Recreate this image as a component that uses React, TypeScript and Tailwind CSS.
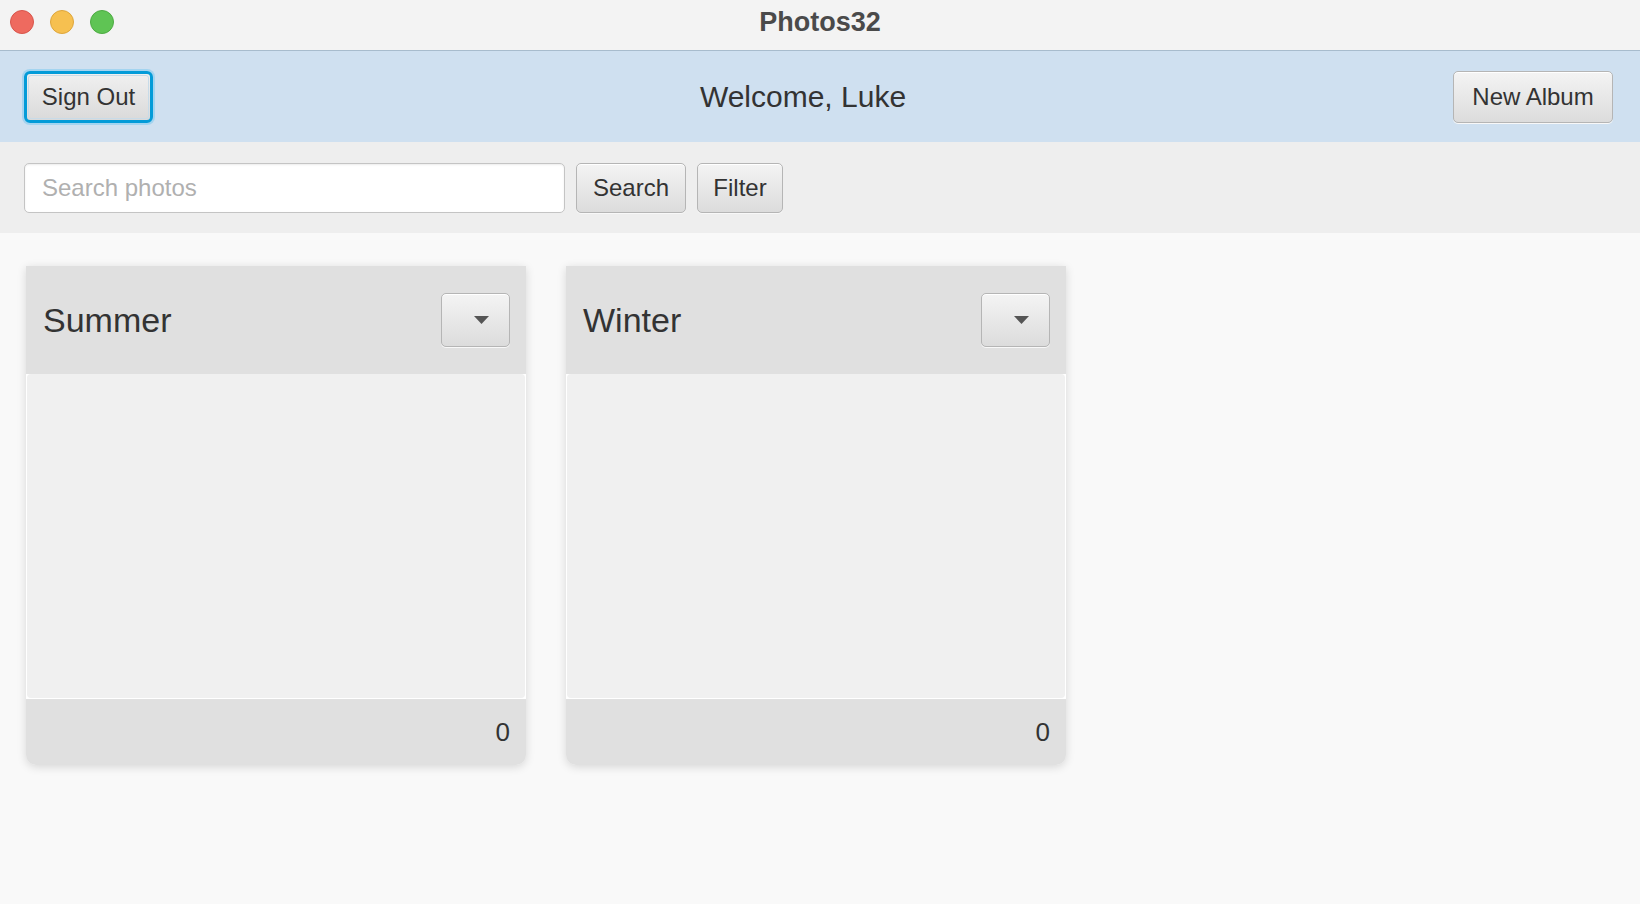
import React from 'react';

const btn =
    "rounded-[5px] border border-[#b5b5b5] bg-gradient-to-b from-[#f4f4f4] to-[#dcdcdc] text-[#333] text-[24px] shadow-[inset_0_1px_0_#ffffff,0_1px_0_#f8f8f8]";

function AlbumCard({ name, count }: { name: string; count: number }) {
    return (
        <div className="w-[500px] flex flex-col rounded-b-[10px] shadow-[0_2px_10px_rgba(0,0,0,0.14)]">
            <div className="h-[108px] bg-[#e0e0e0] flex items-center justify-between pl-[17px] pr-[16px]">
                <span className="text-[34px] text-[#333]">{name}</span>
                <button className={`${btn} w-[69px] h-[54px] flex items-center justify-end pr-[20px]`}>
                    <svg width="15" height="8" viewBox="0 0 15 8">
                        <path d="M0 0 H15 L7.5 8 Z" fill="#555" />
                    </svg>
                </button>
            </div>
            <div className="h-[325px] bg-white px-px pb-px">
                <div className="h-full bg-[#f0f0f0] rounded-[4px]"></div>
            </div>
            <div className="h-[66px] bg-[#e0e0e0] rounded-b-[10px] flex items-center justify-end pr-[16px]">
                <span className="text-[26px] text-[#333]">{count}</span>
            </div>
        </div>
    );
}

export default function App() {
    return (
        <div className="w-[1640px] h-[904px] bg-[#f9f9f9] flex flex-col font-['Liberation_Sans',Arial,sans-serif]">
            {/* Title bar */}
            <div className="h-[51px] bg-[#f3f3f3] border-b border-[#a8bccd] grid grid-cols-[1fr_auto_1fr] items-center px-[10px] pb-[6px]">
                <div className="flex items-center gap-[16px]">
                    <div className="w-[24px] h-[24px] rounded-full bg-[#ee6a5f] border border-[#d8554b]"></div>
                    <div className="w-[24px] h-[24px] rounded-full bg-[#f6c050] border border-[#dea63b]"></div>
                    <div className="w-[24px] h-[24px] rounded-full bg-[#5fc454] border border-[#4dab42]"></div>
                </div>
                <span className="text-[27px] font-bold text-[#4a4a4a]">Photos32</span>
                <div></div>
            </div>

            {/* Header */}
            <div className="h-[91px] bg-[#cfe0f0] flex items-center pl-[24px] pr-[27px]">
                <button className="w-[129px] h-[52px] rounded-[6px] border-[3px] border-[#039bd8] shadow-[0_0_0_2px_rgba(120,200,240,0.5)] bg-gradient-to-b from-[#f0f0f0] to-[#dadada] text-[#333] text-[24px] p-[1px]">
                    <div className="w-full h-full rounded-[3px] border border-[#c8dbe8] flex items-center justify-center">Sign Out</div>
                </button>
                <div className="flex-1 text-center text-[30px] text-[#333]">Welcome, Luke</div>
                <button className={`${btn} w-[160px] h-[52px]`}>New Album</button>
            </div>

            {/* Search row */}
            <div className="h-[91px] bg-[#eeeeee] flex items-center gap-[11px] px-[24px]">
                <input
                    className="w-[541px] h-[50px] rounded-[5px] border border-[#c4c4c4] bg-white px-[17px] text-[24px] text-[#333] placeholder:text-[#b0b0b0] outline-none shadow-[inset_0_1px_2px_rgba(0,0,0,0.08)]"
                    placeholder="Search photos"
                />
                <button className={`${btn} w-[110px] h-[50px]`}>Search</button>
                <button className={`${btn} w-[86px] h-[50px]`}>Filter</button>
            </div>

            {/* Albums */}
            <div className="flex gap-[40px] pt-[33px] pl-[26px]">
                <AlbumCard name="Summer" count={0} />
                <AlbumCard name="Winter" count={0} />
            </div>
        </div>
    );
}
